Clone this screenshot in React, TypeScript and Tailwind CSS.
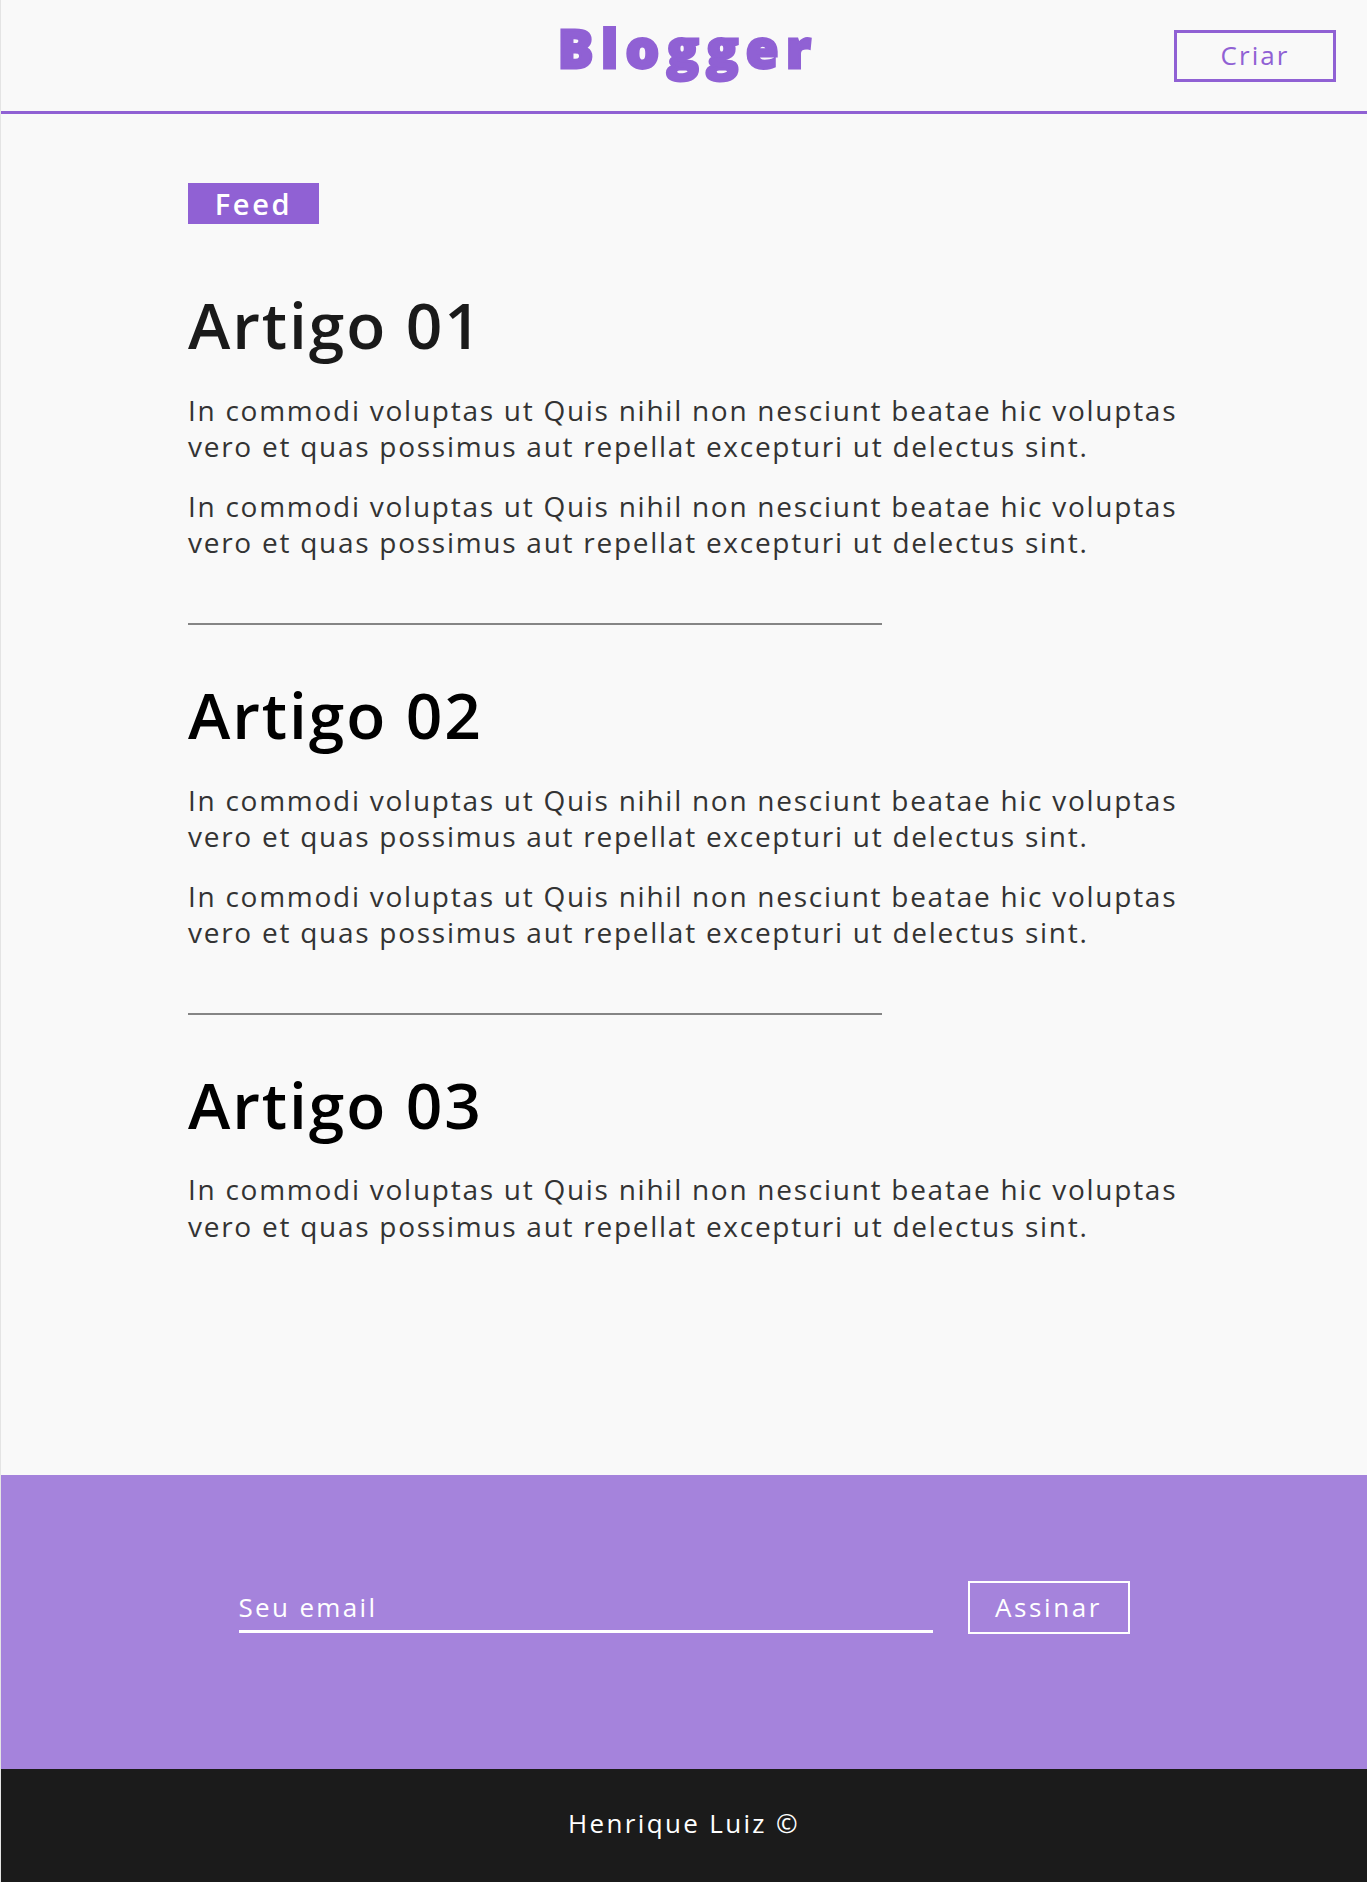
import React from "react";

const para =
  "In commodi voluptas ut Quis nihil non nesciunt beatae hic voluptas vero et quas possimus aut repellat excepturi ut delectus sint.";

function Article({
  title,
  paras,
  divider,
  dark,
}: {
  title: string;
  paras: number;
  divider: boolean;
  dark?: boolean;
}) {
  return (
    <article className="flex flex-col">
      <h2
        className={
          dark
            ? "text-[64px] leading-[1.2] font-semibold text-black tracking-[0.03em]"
            : "text-[64px] leading-[1.2] font-semibold text-[#1a1a1a] tracking-[0.03em]"
        }
      >
        {title}
      </h2>
      <div className="mt-[28px] flex flex-col gap-[23px]">
        {Array.from({ length: paras }).map((_, i) => (
          <p key={i} className="text-[28px] leading-[36.5px] text-[#333333] tracking-[0.062em] max-w-[1000px]">
            {para}
          </p>
        ))}
      </div>
      {divider && <div className="mt-[62px] mb-[52px] h-[2px] w-[694px] bg-[#858585]" />}
    </article>
  );
}

export default function App() {
  return (
    <div
      className="min-h-screen flex flex-col bg-[#f9f9f9] border-l border-[#e4e4e4]"
      style={{ fontFamily: '"Open Sans", "Liberation Sans", sans-serif' }}
    >
      <header className="h-[114px] border-b-[3px] border-[#9061d4] grid grid-cols-[1fr_auto_1fr] items-center">
        <div />
        <h1 className="self-start mt-[21px] pl-[8px] text-[53px] leading-none font-extrabold text-[#9061d4] tracking-[0.14em] [-webkit-text-stroke:2.8px_#9061d4]">
          Blogger
        </h1>
        <div className="flex justify-end pr-[31px]">
          <button className="w-[162px] h-[52px] border-[3px] border-[#9061d4] text-[#9061d4] text-[26px] tracking-[0.08em] flex items-center justify-center">
            Criar
          </button>
        </div>
      </header>

      <main className="flex-1 pl-[187px] pt-[69px] pb-[230px]">
        <div className="w-[131px] h-[41px] bg-[#9061d4] text-white text-[29px] font-semibold flex items-center justify-center tracking-[0.09em]">
          Feed
        </div>
        <div className="mt-[63px] flex flex-col">
          <Article title="Artigo 01" paras={2} divider />
          <Article title="Artigo 02" paras={2} divider dark />
          <Article title="Artigo 03" paras={1} divider={false} dark />
        </div>
      </main>

      <section className="h-[294px] bg-[#a583dc] flex justify-center items-start pt-[106px]">
        <form className="flex items-end gap-[35px]" onSubmit={(e) => e.preventDefault()}>
          <input
            type="email"
            placeholder="Seu email"
            className="w-[694px] h-[44px] mb-[1px] bg-transparent border-b-[3px] border-white text-white placeholder:text-white text-[26px] tracking-[0.09em] outline-none pb-[5px]"
          />
          <button
            type="submit"
            className="w-[162px] h-[53px] border-2 border-white text-white text-[26px] tracking-[0.1em] flex items-center justify-center"
          >
            Assinar
          </button>
        </form>
      </section>

      <footer className="h-[113px] bg-[#1b1b1b] flex items-center justify-center pb-[4px]">
        <span className="text-white text-[26px] tracking-[0.09em]">Henrique Luiz ©</span>
      </footer>
    </div>
  );
}
